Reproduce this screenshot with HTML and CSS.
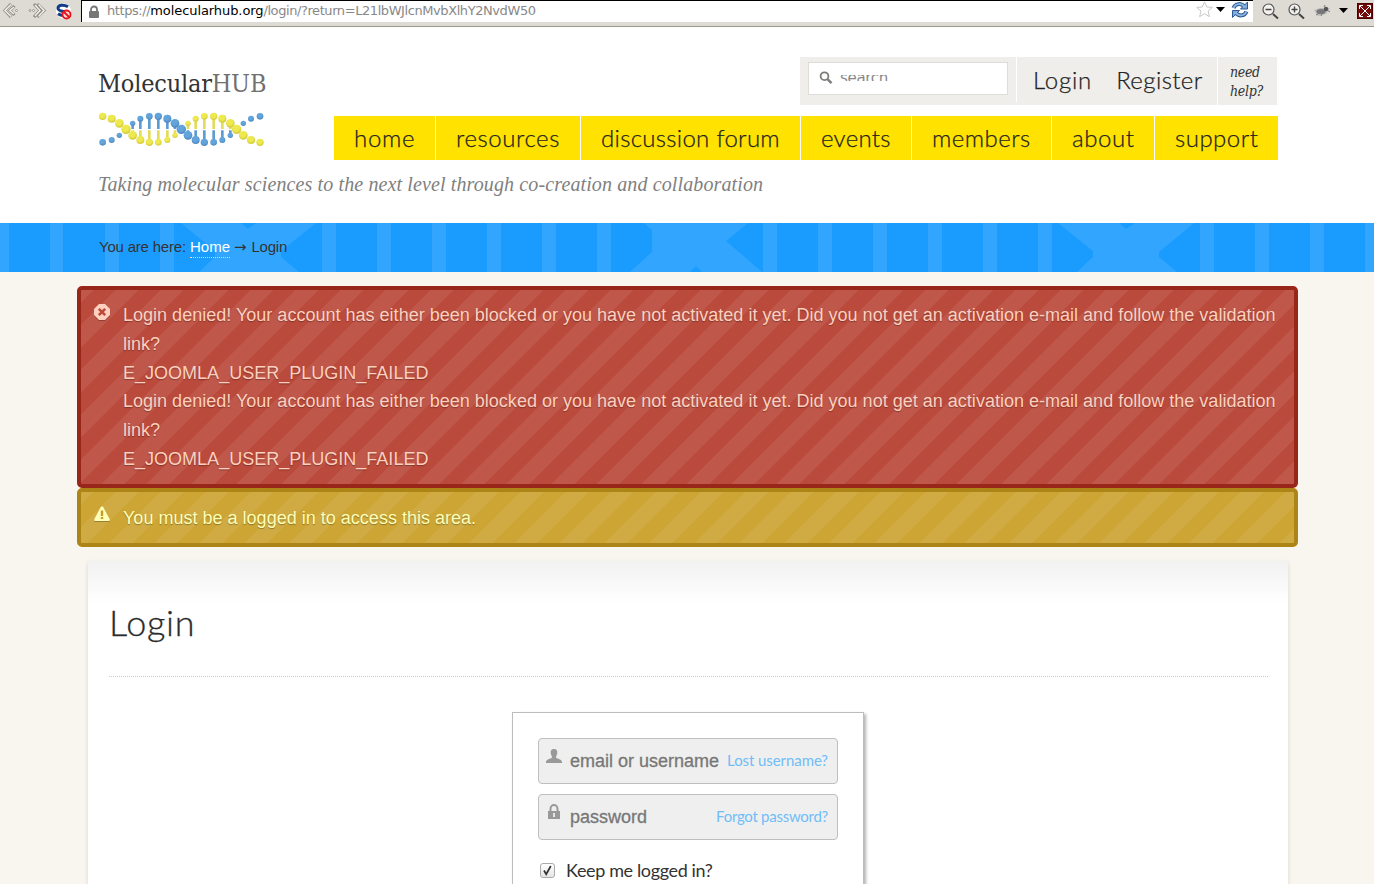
FILE: index.html
```
<!DOCTYPE html>
<html lang="en">
<head>
<meta charset="utf-8">
<title>MolecularHUB - Login</title>
<link rel="stylesheet" href="styles.css">
</head>
<body>
<div class="toolbar">
  <svg class="tools-left" width="81" height="26" viewBox="0 0 81 26">
    <g fill="none" stroke="#8c8983" stroke-width="3"><path d="M11 4 5 10.500 11 17M14.500 6 10 10.500 14.500 15"/><path d="M34 4 40 10.500 34 17M37.500 4 44 10.500 37.500 17"/></g>
    <g fill="none" stroke="#efede8" stroke-width="1.600"><path d="M11 4.500 5 10.500 11 16.500M14 7 10 10.500 14 14"/><path d="M35 5 40 10.500 35 16M38.500 4.500 44 10.500 38.500 16.500"/></g>
    <g fill="#eee" stroke="#8c8983" stroke-width=".8"><circle cx="16.500" cy="10.500" r="1"/><circle cx="30" cy="10.500" r="1"/><circle cx="33.500" cy="10.500" r="1"/></g>
    <circle cx="63.500" cy="11" r="7.500" fill="#fff"/>
    <path d="M68 6.800C63.500 4 58 5 58 8.200c0 4 9 2.500 9 5.300 0 2.600-6 2.500-9 .3" fill="none" stroke="#123c88" stroke-width="3"/>
    <circle cx="66.500" cy="14.500" r="4" fill="#fdd" stroke="#e3121b" stroke-width="1.800"/><path d="m64 12 5 5" stroke="#e3121b" stroke-width="2"/>
  </svg>
  <div class="address">
    <svg width="12" height="14" viewBox="0 0 12 14"><path d="M3 7V4.500a3 3 0 0 1 6 0V7" fill="none" stroke="#777" stroke-width="1.800"/><rect x="1" y="6" width="10" height="7" rx="1" fill="#777"/></svg>
    <span class="url">https://<b>molecularhub.org</b>/login/?return=L21lbWJlcnMvbXlhY2NvdW50</span>
    <svg class="address-tools" width="58" height="20" viewBox="1195 2 58 20">
      <path d="m1204.500 2.800 2.300 5.200 5.500.4-4.200 3.700 1.400 5.600-5-3-4.900 3 1.400-5.600-4.200-3.700 5.500-.4z" fill="#fff" stroke="#c9c9c9"/>
      <path d="M1216 8h9l-4.500 5z"/>
      <g fill="none" stroke="#2d5a95" stroke-width="4"><path d="M1233.500 9c2-5 8-5 11-1M1246.500 12.500c-2 5-8 5-11 1"/></g>
      <g fill="#7fa9d7" stroke="#2d5a95"><path d="M1247.500 3v7h-7zM1232.500 18.500v-7h7z"/></g>
      <g fill="none" stroke="#8fb6df" stroke-width="2"><path d="M1233.500 9c2-5 8-5 11-1M1246.500 12.500c-2 5-8 5-11 1"/></g>
    </svg>
  </div>
  <svg width="121" height="26" viewBox="1253 0 121 26">
    <g fill="#f3f2ef" stroke="#555" stroke-width="1.200"><circle cx="1268.500" cy="9.500" r="5.500"/><circle cx="1294.500" cy="9.500" r="5.500"/></g>
    <path d="m1273 14 5 4.500M1299 14l5 4.500" stroke="#444" stroke-width="2"/>
    <path d="M1265.500 9.500h6M1291.500 9.500h6M1294.500 6.500v6" stroke="#444" stroke-width="1.400"/>
    <path d="m1314 10 6-2 10 0-4 6-8 2z" fill="#bbb"/><ellipse cx="1321" cy="11.500" rx="4.500" ry="2.500" fill="#777"/><circle cx="1326" cy="9" r="2.200" fill="#555"/><path d="m1316 15 5-3M1321 16l2-4M1327 10l3 2M1324 7l1-2" stroke="#777"/>
    <path d="M1339 8h9l-4.500 5z"/>
    <rect x="1357.500" y="3.500" width="15" height="15" fill="#740b0b" stroke="#4b0000"/>
    <path d="m1360 6 10 10M1370 6l-10 10M1359.500 9V5.500h3.500M1367 5.500h3.500V9M1359.500 13v3.500h3.500M1367 16.500h3.500V13" stroke="#fff" stroke-width="1" fill="none"/>
  </svg>
</div>

<header class="header">
  <div class="masthead">
    <div class="brand">
      <div class="wordmark">Molecular<span>HUB</span></div>
      <svg class="dna" width="170" height="40" viewBox="48 165 510 120">
        <defs>
          <radialGradient id="y" cx=".45" cy=".35" r=".65"><stop offset=".5" stop-color="#eee94c"/><stop offset="1" stop-color="#d2c83d"/></radialGradient>
          <radialGradient id="b" cx=".45" cy=".35" r=".65"><stop offset=".5" stop-color="#63a4dc"/><stop offset="1" stop-color="#4b86bd"/></radialGradient>
        </defs>
        <path d="M158 208v14M181 192v30M208 186v36M235 186v36M262 192v30M285 206v16M324 226v14M347 226v28M373 226v36M401 226v36M427 226v28M451 226v14" stroke="#5d9bd0" stroke-width="8"/>
        <path d="M158 226v14M181 226v28M208 226v36M235 226v36M262 226v28M285 226v14M324 206v16M347 192v30M373 186v36M401 186v36M427 192v30M451 206v16" stroke="#e3dc5a" stroke-width="8"/>
        <g fill="url(#b)"><circle cx="68" cy="262" r="10"/><circle cx="95" cy="255" r="9"/><circle cx="118" cy="241" r="8"/><circle cx="158" cy="205" r="8"/><circle cx="181" cy="191" r="9"/><circle cx="208" cy="184" r="10"/><circle cx="235" cy="184" r="11"/><circle cx="262" cy="191" r="12"/><circle cx="285" cy="205" r="13"/><circle cx="304" cy="223" r="14"/><circle cx="324" cy="241" r="13"/><circle cx="347" cy="255" r="12"/><circle cx="373" cy="262" r="11"/><circle cx="401" cy="262" r="10"/><circle cx="427" cy="255" r="9"/><circle cx="451" cy="241" r="8"/><circle cx="490" cy="205" r="8"/><circle cx="513" cy="191" r="9"/><circle cx="540" cy="184" r="10"/></g>
        <g fill="url(#y)"><circle cx="68" cy="184" r="11"/><circle cx="95" cy="191" r="12"/><circle cx="118" cy="205" r="13"/><circle cx="138" cy="223" r="14"/><circle cx="158" cy="241" r="13"/><circle cx="181" cy="255" r="12"/><circle cx="208" cy="262" r="11"/><circle cx="235" cy="262" r="10"/><circle cx="262" cy="255" r="9"/><circle cx="285" cy="241" r="8"/><circle cx="324" cy="205" r="8"/><circle cx="347" cy="191" r="9"/><circle cx="373" cy="184" r="10"/><circle cx="401" cy="184" r="11"/><circle cx="427" cy="191" r="12"/><circle cx="451" cy="205" r="13"/><circle cx="470" cy="223" r="14"/><circle cx="490" cy="241" r="13"/><circle cx="513" cy="255" r="12"/><circle cx="540" cy="262" r="11"/></g>
      </svg>
    </div>
    <div class="menus">
      <div class="account">
        <div class="search"><svg width="14" height="14" viewBox="0 0 14 14"><circle cx="5.500" cy="5.200" r="3.900" fill="none" stroke="#7d7d7b" stroke-width="1.800"/><path d="m8.500 8.200 4 4" stroke="#7d7d7b" stroke-width="2.400"/></svg><span>search</span></div>
        <div class="account-links"><a class="login">Login</a><a class="register">Register</a></div>
        <div class="help">need<br>help?</div>
      </div>
      <nav class="nav"><a class="n1">home</a><a class="n2">resources</a><a class="n3">discussion forum</a><a class="n4">events</a><a class="n5">members</a><a class="n6">about</a><a class="n7">support</a></nav>
    </div>
  </div>
  <p class="tagline">Taking molecular sciences to the next level through co-creation and collaboration</p>
</header>

<div class="trail">
  <svg class="trail-art" width="1374" height="49" viewBox="0 223 1374 49" fill="#32a6ff">
    <path d="M0 223h9v49H0zM50 223h13v49H50zM105 223h14v49h-14zM160 223h14v49h-14zM322 223h14v49h-14zM377 223h14v49h-14zM432 223h14v49h-14zM487 223h14v49h-14zM542 223h14v49h-14zM597 223h14v49h-14zM763 223h14v49h-14zM818 223h14v49h-14zM873 223h14v49h-14zM928 223h14v49h-14zM983 223h14v49h-14zM1038 223h14v49h-14zM1200 223h14v49h-14zM1255 223h14v49h-14zM1310 223h14v49h-14zM1365 223h9v49h-9z"/>
    <path d="M181 223h60l7 6 8-6h60l-35 28v6l18 15H199l16-15v-6z"/>
    <path d="M644 223h104l-22 18 36 31h-60l-6-6-6 6h-60l22-20v-22z"/>
    <path d="M1058 223h61l7 6 9-6h59l-35 29v5l18 15h-100l16-15v-6z"/>
  </svg>
  <div class="crumbs">You are here: <a>Home</a> <i>→</i> Login</div>
</div>

<main>
  <div class="alert error">
    <svg width="16" height="16" viewBox="0 0 16 16"><path d="M5 0h6l5 5v6l-5 5H5l-5-5V5z" fill="#ffd0bf"/><path d="m4.800 4.800 6.400 6.400M11.200 4.800l-6.400 6.400" stroke="#ba4a3c" stroke-width="2.600"/></svg>
    <div>
      <p>Login denied! Your account has either been blocked or you have not activated it yet. Did you not get an activation e-mail and follow the validation<br>link?</p>
      <p class="code">E_JOOMLA_USER_PLUGIN_FAILED</p>
      <p>Login denied! Your account has either been blocked or you have not activated it yet. Did you not get an activation e-mail and follow the validation<br>link?</p>
      <p class="code">E_JOOMLA_USER_PLUGIN_FAILED</p>
    </div>
  </div>
  <div class="alert warning">
    <svg width="16" height="16" viewBox="0 0 16 16"><path d="M8 .5c.8 0 1.200.5 1.600 1.200l6 11.300c.5 1 .2 2-1 2H1.400c-1.200 0-1.500-1-1-2l6-11.300C6.800 1 7.200.5 8 .5z" fill="#ffffb6"/><path d="M8 4.500V10M8 11v2" stroke="#c49c2c" stroke-width="2.400"/></svg>
    <div><p class="notice">You must be a logged in to access this area.</p></div>
  </div>

  <section class="page">
    <h1>Login</h1>
    <form class="login-box">
      <div class="field"><svg width="16" height="16" viewBox="0 0 16 16"><path d="M8 0c3 0 3.600 2.200 3.200 4.500C10.900 6.200 10 7 10 8.300c0 1.500 6 1.700 6 4.700v1H0v-1c0-3 6-3.200 6-4.700C6 7 5.100 6.200 4.800 4.500 4.400 2.200 5 0 8 0z" fill="#999"/></svg><span class="label email">email or username</span><a class="lost">Lost username?</a></div>
      <div class="field"><svg width="16" height="16" viewBox="0 0 16 16"><path d="M4.500 8V5a3.500 3.900 0 0 1 7 0v3" fill="none" stroke="#999" stroke-width="2"/><path d="M2 7h12v8H2z" fill="#999"/><path d="M8 9v4" stroke="#efefef" stroke-width="1.800"/></svg><span class="label pass">password</span><a class="forgot">Forgot password?</a></div>
      <label class="keep"><span class="box"><svg width="13" height="13" viewBox="0 0 13 13"><path d="m3 6.500 2.200 3.700L9.800 2" fill="none" stroke="#333" stroke-width="1.700"/></svg></span><span>Keep me logged in?</span></label>
    </form>
  </section>
</main>
</body>
</html>
```
FILE: styles.css
```
* { box-sizing: border-box; }
html, body { height: 884px; overflow: hidden; }
body { margin: 0; background: #f9f6ef; color: #333; font-family: "Liberation Sans", Arial, sans-serif; display: flex; flex-direction: column; }
p, h1 { margin: 0; }
svg { display: block; flex: none; }

.toolbar { height: 27px; flex: none; display: flex; background: #dedbd5; border-bottom: 1px solid #9c978a; }
.address { flex: 1; height: 22px; display: flex; background: #fff; border: solid #000; border-width: 1px 0 0 1px; padding-left: 6px; }
.address > svg:first-child { margin-top: 4px; }
.url { margin-left: 7px; font: 13px/19px "DejaVu Sans", sans-serif; letter-spacing: -.42px; color: #888; white-space: nowrap; }
.url b { font-weight: normal; color: #000; letter-spacing: -.08px; }
.address-tools { margin-left: auto; }

.header { height: 196px; flex: none; background: #fff; padding: 30px 96px 0 98px; }
.masthead { display: flex; justify-content: space-between; height: 103px; }
.brand { padding-top: 10px; }
.wordmark { height: 43px; font: 25px/33px "DejaVu Serif Condensed", "DejaVu Serif", serif; font-stretch: condensed; letter-spacing: -.2px; color: #333; white-space: nowrap; }
.wordmark span { color: #707070; }
.dna { margin-left: -2px; }
.menus { display: flex; flex-direction: column; align-items: flex-end; gap: 11px; }
.account { width: 477px; height: 48px; margin-right: 1px; display: flex; background: #efeeea; }
.search { width: 200px; height: 33px; margin: 5px 8px 0; background: #fff; border: 1px solid #deddd5; display: flex; padding: 8px 0 0 10px; }
.search span { margin: 4px 0 0 7px; height: 6px; overflow: hidden; font: 15px/6px "DejaVu Sans", sans-serif; letter-spacing: -.3px; color: #888; }
.account-links { width: 201px; height: 45px; border-left: 1px solid #fff; display: flex; padding-left: 16px; gap: 24px; font: 300 24px/46px Lato, sans-serif; color: #222; -webkit-text-stroke: .25px #222; }
.help { border-left: 1px solid #fff; padding: 6px 0 0 12px; font: italic 14px/19px "DejaVu Serif Condensed", "DejaVu Serif", serif; letter-spacing: -.3px; font-stretch: condensed; width: 60px; }
.login { letter-spacing: .8px; }
.register { letter-spacing: .4px; }
.nav { display: flex; height: 44px; gap: 1px; font: 300 24px/43px Lato, sans-serif; color: #222; -webkit-text-stroke: .25px #222; }
.nav a { background: #ffe200; padding-left: 20px; white-space: nowrap; }
.n1 { width: 101px; letter-spacing: .7px; }
.n2 { width: 144px; letter-spacing: .58px; }
.n3 { width: 219px; letter-spacing: .3px; }
.n4 { width: 110px; letter-spacing: .3px; }
.n5 { width: 139px; letter-spacing: .45px; }
.n6 { width: 102px; letter-spacing: .6px; }
.n7 { width: 123px; letter-spacing: .5px; }
.tagline { margin-top: 12px; font: italic 20px/24px "Liberation Serif", serif; letter-spacing: .12px; color: #808080; white-space: nowrap; }

.trail { height: 49px; flex: none; background: #1a9cff; display: grid; }
.trail > * { grid-area: 1 / 1; }
.crumbs { z-index: 1; padding-left: 99px; font-size: 15px; line-height: 48px; letter-spacing: -.2px; white-space: nowrap; }
.crumbs a { color: #fff; border-bottom: 1px dotted #ffd0a0; padding-bottom: 2px; letter-spacing: .05px; }
.crumbs i { font: 15px "DejaVu Sans", sans-serif; margin: 0 1px 0 0; }

main { flex: 1; min-height: 0; padding-top: 14px; }
.alert { width: 1221px; margin-left: 77px; border: 4px solid; border-radius: 5px; display: flex; gap: 13px; padding: 11px 0 0 13px; font-size: 18px; line-height: 28.8px; background-position: -5px -5px; background-size: 45px 45px; background-image: linear-gradient(135deg, rgba(255,255,255,.07) 25%, transparent 25%, transparent 50%, rgba(255,255,255,.07) 50%, rgba(255,255,255,.07) 75%, transparent 75%); white-space: nowrap; }
.alert svg { margin-top: 3px; filter: drop-shadow(0 1px 0 rgba(0,0,0,.25)); }
.alert p { text-shadow: 0 1px 1px rgba(0,0,0,.3); letter-spacing: .012px; }
.error { height: 202px; background-color: #ba4a3c; border-color: #98271a; color: #ffd0bf; }
.warning { height: 59px; background-color: #cca535; border-color: #ac8516; color: #ffffb6; padding-top: 12px; }
.warning svg { margin-top: 2px; }

.page { width: 1200px; height: 323px; margin: 14px 0 0 88px; padding: 36px 20px 0 21px; background: linear-gradient(#f1f1f1, #fff 42px); box-shadow: 0 2px 4px rgba(80,70,30,.18); }
h1 { height: 80px; border-bottom: 1px dotted #ccc; font: 300 36px/50px Lato, sans-serif; letter-spacing: .7px; color: #2b2b2b; -webkit-text-stroke: .3px #2b2b2b; }
.login-box { width: 352px; height: 172px; margin: 35px 0 0 403px; border: 1px solid #bdbdbd; border-bottom: 0; padding: 25px 25px 0; box-shadow: 2px 2px 3px rgba(0,0,0,.3); background: #fff; }
.field { height: 46px; margin-bottom: 10px; border: 1px solid #bfbfbf; border-radius: 4px; background: #efefef; display: flex; padding: 0 9px 0 7px; line-height: 44px; white-space: nowrap; }
.field svg { margin-top: 10px; }
.field:nth-child(2) svg { margin-top: 9px; }
.label { margin-left: 8px; font-size: 18px; color: #777; -webkit-text-stroke: .3px #777; }
.field a { margin-left: auto; font: 15px/43px Lato, sans-serif; letter-spacing: -.08px; color: #70bdf7; }
.field .forgot { letter-spacing: -.27px; }
.keep { display: flex; gap: 11px; padding: 9px 0 0 2px; font: 18px/22px Lato, sans-serif; letter-spacing: -.36px; color: #333; }
.box { width: 15px; height: 15px; margin-top: 4px; border: 1px solid #aaa; border-radius: 3px; background: linear-gradient(#fff, #e5e5e5); }
```
